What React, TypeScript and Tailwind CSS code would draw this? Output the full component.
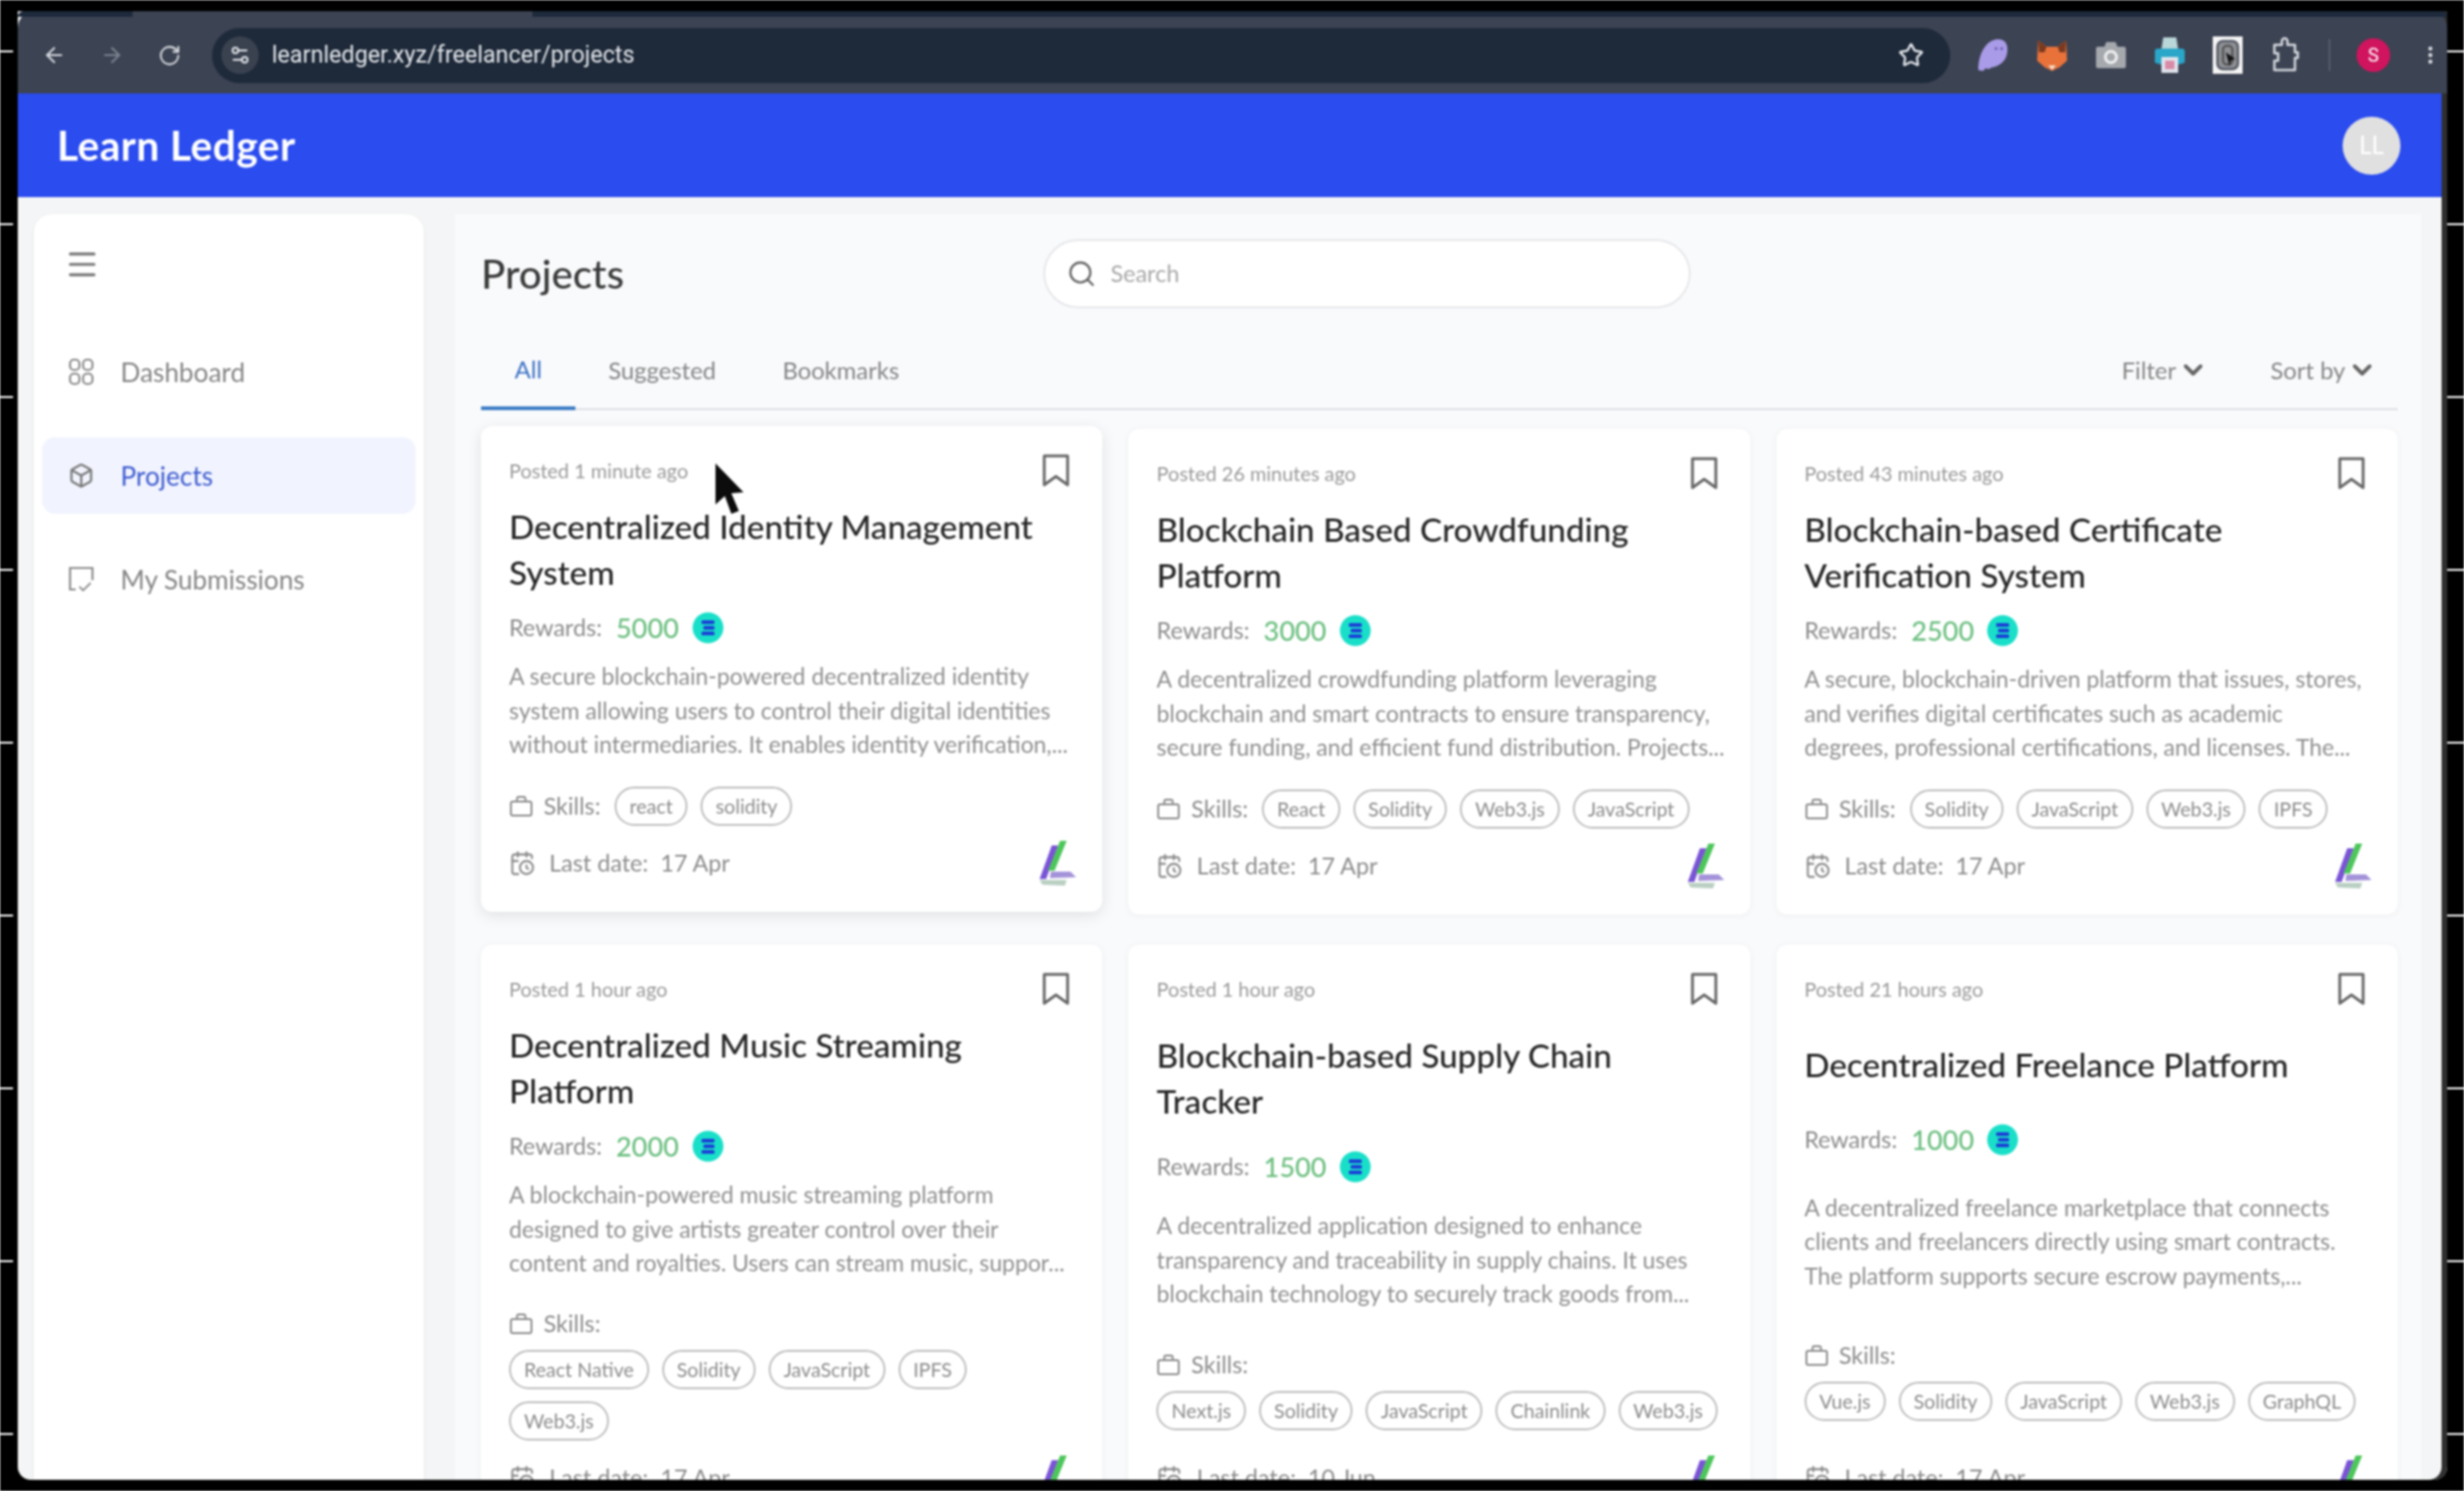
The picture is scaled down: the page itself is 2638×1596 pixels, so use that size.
/**
 * Learn Ledger projects page inside a browser window
 */

import React from 'react';
import {
  ArrowLeft,
  ArrowRight,
  Box,
  CalendarClock,
  ChevronDown,
  EllipsisVertical,
  Menu,
  RotateCw,
  Search,
  Settings2,
  Star,
} from 'lucide-react';

interface Project {
  posted: string;
  title: string;
  reward: string;
  desc: string[];
  skills: string[];
  lastDate: string;
}

const projects: Project[] = [
  {
    posted: 'Posted 1 minute ago',
    title: 'Decentralized Identity Management System',
    reward: '5000',
    desc: [
      'A secure blockchain-powered decentralized identity',
      'system allowing users to control their digital identities',
      'without intermediaries. It enables identity verification,...',
    ],
    skills: ['react', 'solidity'],
    lastDate: '17 Apr',
  },
  {
    posted: 'Posted 26 minutes ago',
    title: 'Blockchain Based Crowdfunding Platform',
    reward: '3000',
    desc: [
      'A decentralized crowdfunding platform leveraging',
      'blockchain and smart contracts to ensure transparency,',
      'secure funding, and efficient fund distribution. Projects...',
    ],
    skills: ['React', 'Solidity', 'Web3.js', 'JavaScript'],
    lastDate: '17 Apr',
  },
  {
    posted: 'Posted 43 minutes ago',
    title: 'Blockchain-based Certificate Verification System',
    reward: '2500',
    desc: [
      'A secure, blockchain-driven platform that issues, stores,',
      'and verifies digital certificates such as academic',
      'degrees, professional certifications, and licenses. The...',
    ],
    skills: ['Solidity', 'JavaScript', 'Web3.js', 'IPFS'],
    lastDate: '17 Apr',
  },
  {
    posted: 'Posted 1 hour ago',
    title: 'Decentralized Music Streaming Platform',
    reward: '2000',
    desc: [
      'A blockchain-powered music streaming platform',
      'designed to give artists greater control over their',
      'content and royalties. Users can stream music, suppor...',
    ],
    skills: ['React Native', 'Solidity', 'JavaScript', 'IPFS', 'Web3.js'],
    lastDate: '17 Apr',
  },
  {
    posted: 'Posted 1 hour ago',
    title: 'Blockchain-based Supply Chain Tracker',
    reward: '1500',
    desc: [
      'A decentralized application designed to enhance',
      'transparency and traceability in supply chains. It uses',
      'blockchain technology to securely track goods from...',
    ],
    skills: ['Next.js', 'Solidity', 'JavaScript', 'Chainlink', 'Web3.js'],
    lastDate: '10 Jun',
  },
  {
    posted: 'Posted 21 hours ago',
    title: 'Decentralized Freelance Platform',
    reward: '1000',
    desc: [
      'A decentralized freelance marketplace that connects',
      'clients and freelancers directly using smart contracts.',
      'The platform supports secure escrow payments,...',
    ],
    skills: ['Vue.js', 'Solidity', 'JavaScript', 'Web3.js', 'GraphQL'],
    lastDate: '17 Apr',
  },
];

const ticks = [0, 1, 2, 3, 4, 5, 6, 7, 8];

function Ticks({ width }: { width: string }) {
  return (
    <div className={`${width} flex shrink-0 flex-col gap-[183px] pt-[54px]`}>
      {ticks.map(t => (
        <div key={t} className="h-[2px] w-full bg-white" />
      ))}
    </div>
  );
}

function TokenIcon() {
  return (
    <svg width="34" height="34" viewBox="0 0 34 34" className="shrink-0">
      <circle cx="17" cy="17" r="16.5" fill="#19dfc9" />
      <rect x="10" y="9" width="14" height="4" rx="1.5" fill="#1b3fd6" />
      <rect x="12" y="15" width="12" height="4" rx="1.5" fill="#1b3fd6" />
      <rect x="10" y="21" width="14" height="4" rx="1.5" fill="#1b3fd6" />
    </svg>
  );
}

function LedgerLogo() {
  return (
    <svg width="41" height="50" viewBox="0 0 41 50" className="-my-[5px] -mr-[4px] shrink-0">
      <path d="M14 6 L21 6 L8 42 L1 42 Z" fill="#7a54d6" />
      <path d="M23 1 L30 1 L17 33 L10 33 Z" fill="#4cc65a" />
      <path d="M13 34 L34 34 L40 40 L12 41 Z" fill="#8d78cf" opacity="0.8" />
      <path d="M1 43 L30 43 L28 49 L4 48 Z" fill="#a9c4b4" opacity="0.8" />
    </svg>
  );
}

function BookmarkIcon() {
  return (
    <svg width="29" height="36" viewBox="0 0 29 36" fill="none" stroke="#666" strokeWidth="3" className="mr-[4px] shrink-0">
      <path d="M2 2 H27 V33 L14.5 24 L2 33 Z" strokeLinejoin="round" />
    </svg>
  );
}

function BagIcon() {
  return (
    <svg width="26" height="26" viewBox="0 0 26 26" fill="none" stroke="#8a8a8a" strokeWidth="2" className="shrink-0">
      <rect x="2" y="8" width="22" height="15" rx="2" />
      <path d="M8.5 8 V5 a2 2 0 0 1 2-2 h5 a2 2 0 0 1 2 2 V8" />
    </svg>
  );
}

function DashboardIcon() {
  return (
    <svg width="28" height="30" viewBox="0 0 28 30" fill="none" stroke="#8a8a8a" strokeWidth="2.2">
      <rect x="2" y="2" width="10" height="11" rx="4" />
      <rect x="16" y="2" width="10" height="11" rx="4" />
      <rect x="2" y="17" width="10" height="11" rx="4" />
      <rect x="16" y="17" width="10" height="11" rx="4" />
    </svg>
  );
}

function SubmissionsIcon() {
  return (
    <svg width="28" height="28" viewBox="0 0 28 28" fill="none" stroke="#8a8a8a" strokeWidth="2.2">
      <path d="M8 25 H2 V2 H26 V15" />
      <path d="M12 22 L16 26 L24 18" strokeWidth="1.8" />
    </svg>
  );
}

function PuzzleIcon() {
  return (
    <svg width="30" height="40" viewBox="0 0 30 40" fill="none" stroke="#d5d8dd" strokeWidth="2.6" strokeLinejoin="round" className="ml-[31px] shrink-0">
      <path d="M3 9 H11 V5 A3 3 0 0 1 17 5 V9 H25 V17 H28 V23 H25 V36 H3 V26 H7 V18 H3 Z" />
    </svg>
  );
}

function ExtensionIcons() {
  return (
    <div className="flex items-center gap-[29px]">
      <svg width="34" height="36" viewBox="0 0 34 36">
        <path d="M1 34 C1 18 8 2 22 1 C31 1 33 8 32 15 C31 24 24 30 16 31 L12 33 L9 32 L6 35 Z" fill="#a99be8" />
        <circle cx="20" cy="11" r="1.6" fill="#6a5bb0" />
        <circle cx="26" cy="11" r="1.6" fill="#6a5bb0" />
      </svg>
      <svg width="34" height="36" viewBox="0 0 34 36">
        <path d="M2 2 L11 9 H23 L32 2 L33 24 L25 31 L17 35 L9 31 L1 24 Z" fill="#e8723a" />
        <path d="M2 2 L11 9 L9 15 L3 15 Z M32 2 L23 9 L25 15 L31 15 Z" fill="#7a3a20" />
        <path d="M13 29 H21 L17 34 Z" fill="#f3e2d4" />
      </svg>
      <svg width="34" height="30" viewBox="0 0 34 30">
        <path d="M3 6 H10 L12 1 H22 L24 6 H31 A2 2 0 0 1 33 8 V27 A2 2 0 0 1 31 29 H3 A2 2 0 0 1 1 27 V8 A2 2 0 0 1 3 6 Z" fill="#a5a8ad" />
        <circle cx="17" cy="17" r="6" fill="none" stroke="#f2f2f2" strokeWidth="3" />
      </svg>
      <svg width="34" height="40" viewBox="0 0 34 40">
        <path d="M10 1 H24 L26 14 H8 Z" fill="#b9d6d9" />
        <path d="M4 13 H30 A3 3 0 0 1 33 16 V28 L27 30 H7 L1 28 V16 A3 3 0 0 1 4 13 Z" fill="#2aa6c8" />
        <rect x="8" y="22" width="18" height="17" fill="#dfe3ec" />
        <rect x="12" y="26" width="10" height="9" fill="#d98aa6" />
      </svg>
      <svg width="32" height="40" viewBox="0 0 32 40">
        <rect width="32" height="40" fill="#f4f4f4" />
        <rect x="5" y="5" width="22" height="30" rx="6" fill="#8f9196" stroke="#555a64" strokeWidth="2.5" />
        <rect x="11" y="10" width="10" height="20" rx="4" fill="none" stroke="#555" strokeWidth="2.5" />
        <path d="M14 17 L24 24 L19 26 L18 32 Z" fill="#111" />
      </svg>
    </div>
  );
}

function BrowserBar() {
  return (
    <div className="-mr-[6px] flex h-[88px] shrink-0 flex-col rounded-t-[18px] bg-[#3c4353]">
      <div className="flex h-[6px] shrink-0 overflow-hidden rounded-t-[18px] bg-[#1d2a3c]">
        <div className="ml-[123px] h-full w-[428px] bg-[#3c4353]" />
      </div>
      <div className="flex h-[82px] items-center pl-[26px]">
        <ArrowLeft className="h-[26px] w-[26px] shrink-0 text-[#d5d8dd]" strokeWidth={2} />
        <ArrowRight className="ml-[36px] h-[26px] w-[26px] shrink-0 text-[#7c828e]" strokeWidth={2} />
        <RotateCw className="ml-[36px] h-[25px] w-[25px] shrink-0 text-[#d5d8dd]" strokeWidth={2} />
        <div className="ml-[33px] flex h-[59px] w-[1861px] shrink-0 items-center rounded-full bg-[#1e2a3a] pl-[10px] pr-[28px]">
          <div className="flex h-[40px] w-[40px] items-center justify-center rounded-full bg-[#3a4250]">
            <Settings2 className="h-[24px] w-[24px] text-[#e2e4e8]" strokeWidth={2} />
          </div>
          <span className="ml-[14px] flex-1 font-['Roboto',sans-serif] text-[25px] text-[#e4e6ea]">
            learnledger.xyz/freelancer/projects
          </span>
          <Star className="h-[28px] w-[28px] text-[#e8eaee]" strokeWidth={2} />
        </div>
        <div className="ml-[29px] shrink-0">
          <ExtensionIcons />
        </div>
        <PuzzleIcon />
        <div className="ml-[31px] h-[34px] w-[2px] shrink-0 bg-[#565c69]" />
        <div className="ml-[28px] flex h-[36px] w-[36px] shrink-0 items-center justify-center rounded-full bg-[#d0145e] font-['Roboto',sans-serif] text-[20px] text-white">
          S
        </div>
        <EllipsisVertical className="ml-[31px] h-[34px] w-[24px] shrink-0 text-[#d5d8dd]" strokeWidth={2.5} />
      </div>
    </div>
  );
}

function Sidebar() {
  return (
    <aside className="ml-[17px] flex w-[418px] shrink-0 flex-col rounded-t-[20px] bg-white px-[9px] pt-[35px] shadow-sm">
      <Menu className="ml-[24px] h-[38px] w-[38px] text-[#777]" strokeWidth={2} />
      <div className="mt-[55px] flex h-[82px] items-center gap-[28px] pl-[28px] text-[#858585]">
        <DashboardIcon />
        <span className="text-[28px]">Dashboard</span>
      </div>
      <div className="mt-[29px] flex h-[82px] items-center gap-[28px] rounded-[14px] bg-[#f1f4fe] pl-[28px]">
        <Box className="h-[30px] w-[28px] text-[#777]" strokeWidth={2} />
        <span className="text-[28px] text-[#3f5bd0]">Projects</span>
      </div>
      <div className="mt-[29px] flex h-[82px] items-center gap-[28px] pl-[28px] text-[#858585]">
        <SubmissionsIcon />
        <span className="text-[28px]">My Submissions</span>
      </div>
    </aside>
  );
}

function ProjectCard({ project, lifted }: { project: Project; lifted?: boolean }) {
  return (
    <div
      className={`flex flex-col justify-between gap-[14px] rounded-[12px] bg-white pb-[32px] pl-[30px] pr-[31px] pt-[30px] ${
        lifted ? '-translate-y-[3px] shadow-[0_4px_16px_rgba(0,0,0,0.10)]' : 'shadow-[0_1px_8px_rgba(0,0,0,0.05)]'
      }`}
    >
      <div className="flex h-[40px] items-start justify-between">
        <span className="pt-[3px] text-[21.3px] text-[#9a9a9a]">{project.posted}</span>
        <BookmarkIcon />
      </div>
      <h3 className="text-[35.6px] font-medium leading-[48.6px] text-[#262626]">{project.title}</h3>
      <div className="flex h-[41px] items-center">
        <span className="text-[25px] text-[#8c8c8c]">Rewards:</span>
        <span className="ml-[15px] text-[29px] font-medium text-[#6cbf80]">{project.reward}</span>
        <span className="ml-[14px]">
          <TokenIcon />
        </span>
      </div>
      <div className="text-[24.6px] leading-[36.6px] text-[#8f8f8f]">
        {project.desc.map(line => (
          <div key={line} className="whitespace-nowrap">
            {line}
          </div>
        ))}
      </div>
      <div className="flex flex-wrap items-center gap-x-[15px] gap-y-[8px] pb-[6px] pt-[12px]">
        <div className="flex h-[40px] items-center gap-[11px] text-[25px] text-[#8c8c8c]">
          <BagIcon />
          <span>Skills:</span>
        </div>
        <div className="flex flex-wrap gap-x-[14px] gap-y-[13px]">
          {project.skills.map(skill => (
            <span
              key={skill}
              className="flex h-[42px] items-center rounded-full border-2 border-[#bdbdbd] px-[14px] text-[21px] text-[#8c8c8c]"
            >
              {skill}
            </span>
          ))}
        </div>
      </div>
      <div className="flex h-[40px] items-center justify-between">
        <div className="flex items-center gap-[15px] text-[25px] text-[#8c8c8c]">
          <CalendarClock className="h-[28px] w-[28px] text-[#8a8a8a]" strokeWidth={1.8} />
          <span>
            Last date:&nbsp; {project.lastDate}
          </span>
        </div>
        <LedgerLogo />
      </div>
    </div>
  );
}

export default function App() {
  return (
    <div className="relative flex h-[1596px] w-[2638px] overflow-hidden bg-black font-['Lato',sans-serif] blur-[0.8px]">
      <Ticks width="w-[14px]" />
      <div className="ml-[5px] mb-[12px] mt-[12px] flex w-[2601px] flex-col overflow-hidden rounded-b-[14px] bg-[#f4f5f6] pr-[6px] shadow-[inset_-6px_0_0_#2f2f2f]">
        <BrowserBar />
        <header className="flex h-[111px] shrink-0 items-center justify-between bg-[#2b4cef] pl-[42px] pr-[44px]">
          <span className="text-[43.5px] font-bold tracking-[0.5px] text-white">Learn Ledger</span>
          <div className="flex h-[62px] w-[62px] items-center justify-center rounded-full bg-[#e0e0e0] text-[26px] text-white">
            LL
          </div>
        </header>
        <div className="flex min-h-0 flex-1 pt-[18px]">
          <Sidebar />
          <main className="ml-[33px] mr-[22px] flex-1 overflow-hidden bg-[#f9fafc] pl-[28px] pr-[25px] pt-[27px]">
            <div className="flex h-[74px] items-center">
              <h1 className="w-[602px] text-[43px] font-medium text-[#3a3a3a]">Projects</h1>
              <div className="flex h-[74px] w-[693px] items-center rounded-full border-2 border-[#e6e7ea] bg-white pl-[23px]">
                <Search className="h-[32px] w-[32px] text-[#666]" strokeWidth={1.8} />
                <span className="ml-[15px] text-[25px] text-[#a8a8a8]">Search</span>
              </div>
            </div>
            <div className="mt-[25px] flex h-[84px] items-center justify-between border-b-2 border-[#dcdee3]">
              <div className="flex h-full items-stretch text-[25.5px] text-[#858585]">
                <span className="-mb-[2px] flex items-center border-b-4 border-[#3a7cc6] px-[36px] text-[#3a70c4]">All</span>
                <span className="flex items-center px-[35px]">Suggested</span>
                <span className="flex items-center px-[36px]">Bookmarks</span>
              </div>
              <div className="flex items-center gap-[67px] pr-[22px] text-[25.5px] text-[#858585]">
                <span className="flex items-center gap-[2px]">
                  Filter <ChevronDown className="h-[32px] w-[32px] text-[#666]" strokeWidth={3} />
                </span>
                <span className="flex items-center gap-[2px]">
                  Sort by <ChevronDown className="h-[32px] w-[32px] text-[#666]" strokeWidth={3} />
                </span>
              </div>
            </div>
            <div className="mt-[20px] grid grid-cols-3 gap-x-[28px] gap-y-[32px]">
              {projects.map((p, i) => (
                <ProjectCard key={p.title} project={p} lifted={i === 0} />
              ))}
            </div>
          </main>
        </div>
      </div>
      <Ticks width="ml-auto w-[18px]" />
      {/* mouse pointer over the first card */}
      <svg width="34" height="56" viewBox="0 0 34 56" className="absolute left-[764px] top-[495px]">
        <path d="M2 1 L32 32 L19 33 L27 52 L19 55 L12 36 L2 45 Z" fill="#0c0c0c" />
      </svg>
    </div>
  );
}
